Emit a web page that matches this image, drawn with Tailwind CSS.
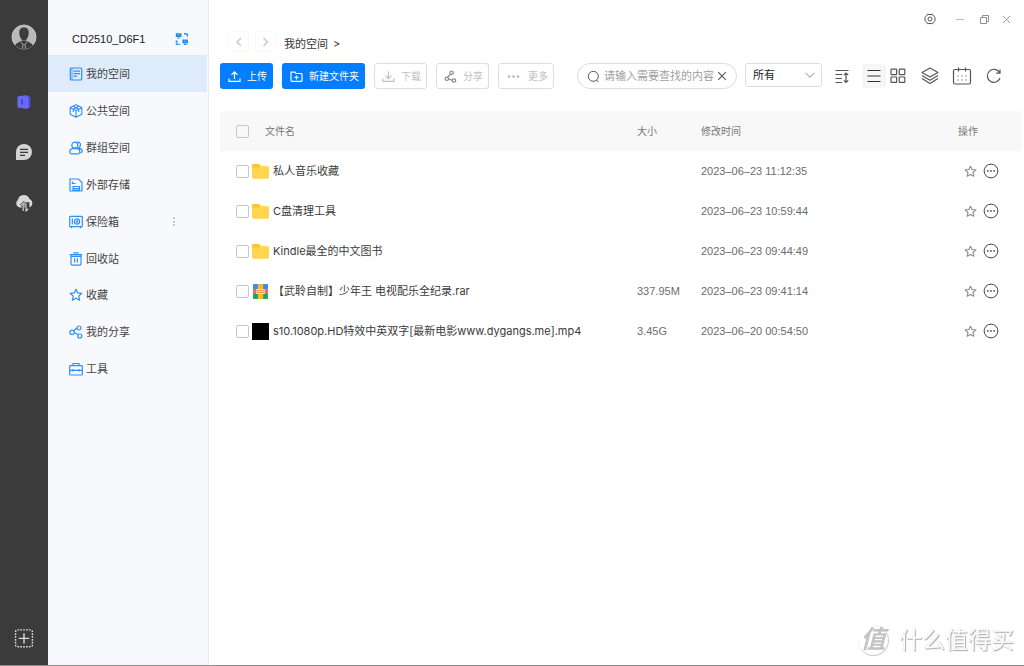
<!DOCTYPE html>
<html lang="zh-CN">
<head>
<meta charset="utf-8">
<meta name="viewport" content="width=device-width, initial-scale=1">
<title>我的空间</title>
<script src="https://cdn.jsdelivr.net/npm/@tailwindcss/browser@4"></script>
</head>
<body class="flex min-h-screen bg-white font-['Inter','Noto_Sans_CJK_SC',sans-serif] text-[11px] leading-4 text-[#444]">

<svg class="hidden" aria-hidden="true">
  <symbol id="star" viewBox="0 0 14 14"><path d="M7 1.200l1.700 3.700 4.100.4-3.100 2.800.9 4.100L7 10.200l-3.600 2 .9-4.100L1.200 5.300l4.100-.4z" fill="none" stroke="currentColor" stroke-width="1.200" stroke-linejoin="round"/></symbol>
  <symbol id="more" viewBox="0 0 16 16"><circle cx="8" cy="8" r="6.900" fill="none" stroke="currentColor" stroke-width="1"/><path d="M4.100 7.200h1.600v1.600H4.100zM7.200 7.200h1.600v1.600H7.200zM10.300 7.200h1.600v1.600h-1.600z" fill="currentColor"/></symbol>
  <symbol id="folder" viewBox="0 0 16 16"><path d="M0 2.200Q0 1 1.200 1h5.200q.8 0 1.200.7L8.600 3.500H16V6H0z" fill="#fbc62d"/><path d="M0 4.200h7l1.500-1.200h6.300Q16 3 16 4.200v9.300Q16 14.800 14.800 14.800H1.200Q0 14.800 0 13.500z" fill="#ffd64c"/></symbol>
</svg>

<aside class="flex w-12 shrink-0 flex-col items-center bg-[#3b3b3b] pt-6 pb-[14px]">
  <button aria-label="账户"><svg class="size-[26px]" viewBox="0 0 26 26"><circle cx="13" cy="13" r="12" fill="#b8b8b8" stroke="#c6c6c6"/><path d="M4 21.500C6 18.500 9 18 10.300 16.800h5.400C17 18 20 18.500 22 21.500Q18 25 13 25T4 21.500z" fill="#3b3b3b"/><path d="M8.300 9q-.3-5.500 4.700-5.500T17.700 9q0 3.500-1.700 6-1.300 1.700-3 1.700T10 15Q8.300 12.500 8.300 9z" fill="#3b3b3b"/><path d="M9.500 17.500l2.700 3M16.500 17.500l-2.700 3M12 20l-.5 4.500M14 20l.5 4.500" stroke="#c0c0c0" stroke-width=".8"/></svg></button>
  <button aria-label="文件" class="mt-11"><svg class="size-4" viewBox="0 0 16 16"><path d="M10 2l4.500.7v11L10 14.500z" fill="#4a4de0"/><path d="M1.500 2.500L11 1v14l-9.500-1.500z" fill="#666bf2"/><path d="M11.700 2.200v12" stroke="#8b90ff" stroke-width=".7"/><path d="M5.300 5.500h1.500v5H5.300z" fill="#3437b5"/></svg></button>
  <button aria-label="消息" class="mt-[33px]"><svg class="size-[18px]" viewBox="0 0 18 18"><path d="M1 17V9a8 8 0 1 1 8 8z" fill="#d4d4d4"/><path d="M5 6.400h8M5 9.400h8M5 12.400h5" stroke="#3b3b3b" stroke-width="1.200"/></svg></button>
  <button aria-label="云传输" class="mt-[33px]"><svg class="h-[18px] w-5" viewBox="0 0 20 18"><path d="M5.500 13.500A4.300 4.300 0 0 1 4 5.800 6 6 0 0 1 15.500 5a4.500 4.500 0 0 1-.5 8.500z" fill="#d8d8d8"/><path d="M9 17V9.500l-2.200 2M9 9v8M12 17V9.500h2.200V14" fill="none" stroke="#3b3b3b" stroke-width="2.400"/><path d="M9.200 17V9.200L7 11.400M12 9v8l2.300-2.200" fill="none" stroke="#cfcfcf" stroke-width="1.200"/></svg></button>
  <button aria-label="添加" class="mt-auto"><svg class="size-[26px]" viewBox="0 0 20 20" fill="none" stroke="#d8d8d8"><rect x="3.500" y="3" width="13" height="13" rx="1.500" stroke-dasharray="1.300 .9" stroke-width="1.100"/><path d="M10 5.500v8M6 9.500h8" stroke-width="1.100"/></svg></button>
</aside>

<nav class="w-[161px] shrink-0 border-r border-[#e8eaed] bg-[#f7f9fc] pt-[23px]">
  <div class="flex h-8 items-center justify-between pr-[19px] pl-6 text-[#222]">
    <span class="font-['Liberation_Sans']">CD2510_D6F1</span>
    <button aria-label="切换设备" class="text-[#1e88f7]"><svg class="size-[14px]" viewBox="0 0 14 14"><path d="M.8 1.200h5.700v3.800H.8zM2.300 5.400h2.800v1.200H2.300zM7.300 7.500H13v3.800H7.300zM8.800 11.800h2.800V13H8.800z" fill="currentColor"/><path d="M9 1.700h3.300v3.500M1.500 8.500v3.700h3.800" fill="none" stroke="currentColor" stroke-width="1.600" stroke-dasharray="2.500 .8"/><path d="M2.300 2.900h2.800M8.800 9.200h2.800" stroke="#83bffc" stroke-width=".8"/></svg></button>
  </div>
  <ul class="mr-px [&_svg]:size-[14px] [&_svg]:text-[#2f8ff5]">
    <li><a href="#mine" aria-current="page" class="flex h-[37px] items-center gap-[3px] bg-[#deebfb] pl-[21px]"><svg viewBox="0 0 14 14" fill="none" stroke="currentColor" stroke-width="1.200"><rect x="1.300" y="1" width="11.400" height="12" rx="1"/><path d="M3 1v12" stroke-width=".8"/><path d="M4.500 4.200h6.500M4.500 6.700h6.500M4.500 9.200h3.500"/></svg>我的空间</a></li>
    <li><a href="#public" class="flex h-[37px] items-center gap-[3px] pl-[21px]"><svg viewBox="0 0 14 14" fill="none" stroke="currentColor" stroke-width="1.100" stroke-linejoin="round"><path d="M7 .8l5.800 2.700v6.800L7 13.200l-5.800-2.900V3.500zM1.200 3.800L7 6.500l5.800-2.700M7 6.500v6.700M4 2.200l5.800 2.900v3M10 2.200L4.200 5.100v3"/></svg>公共空间</a></li>
    <li><a href="#group" class="flex h-[37px] items-center gap-[3px] pl-[21px]"><svg viewBox="0 0 14 14" fill="none" stroke="currentColor" stroke-width="1.200"><circle cx="5.800" cy="4.200" r="3"/><path d="M3.500 7.700h4.300q3 0 3 2.700t-2.300 2.500H3Q.7 12.900.7 10.600T3.500 7.700zM8 1.200q3.400-.4 3.500 2.600 0 2-1.700 3 3.500.9 3.400 3.400-.1 1.500-1.800 1.500"/></svg>群组空间</a></li>
    <li><a href="#external" class="flex h-[37px] items-center gap-[3px] pl-[21px]"><svg viewBox="0 0 14 14" fill="none" stroke="currentColor" stroke-width="1.200"><path d="M1 1h8.500L13 4.500V13H1zM4 13V8.500h6.500V13M4.300 10.500h6M4.300 12h6M3.500 3.500v2h3" /></svg>外部存储</a></li>
    <li class="flex items-center justify-between pr-[26px]"><a href="#safe" class="flex h-[37px] items-center gap-[3px] pl-[21px]"><svg viewBox="0 0 14 14" fill="none" stroke="currentColor" stroke-width="1.200"><rect x=".7" y="1.300" width="12.600" height="10.400" rx=".8"/><circle cx="8" cy="6.500" r="2.600"/><circle cx="8" cy="6.500" r=".6"/><path d="M3.300 3.500v6M2.500 11.700v1.500M11.500 11.700v1.500"/></svg>保险箱</a>
      <button aria-label="保险箱选项"><svg viewBox="0 0 14 14" fill="#888"><path d="M6.400 2.500h1.300v1.300H6.400zM6.400 5.900h1.300v1.300H6.400zM6.400 9.300h1.300v1.300H6.400z"/></svg></button></li>
    <li><a href="#trash" class="flex h-[37px] items-center gap-[3px] pl-[21px]"><svg viewBox="0 0 14 14" fill="none" stroke="currentColor" stroke-width="1.200"><path d="M.8 2.700h12.400M4.300.8h5.400M2 3v8.800q0 1.400 1.400 1.400h7.200q1.400 0 1.400-1.400V3M2.300 4.300h9.400M5.600 6.300v4.200M8.400 6.300v4.200"/></svg>回收站</a></li>
    <li><a href="#favorites" class="flex h-9 items-center gap-[3px] pl-[21px]"><svg><use href="#star"/></svg>收藏</a></li>
    <li><a href="#shares" class="flex h-[37px] items-center gap-[3px] pl-[21px]"><svg viewBox="0 0 14 14" fill="none" stroke="currentColor" stroke-width="1.200"><circle cx="3" cy="7.300" r="2.200"/><circle cx="10" cy="3" r="2"/><circle cx="10.800" cy="11" r="2"/><path d="M4.900 6.200q1-2.500 3.200-3M5.200 7.500l4 2.300"/></svg>我的分享</a></li>
    <li><a href="#tools" class="flex h-[37px] items-center gap-[3px] pl-[21px]"><svg viewBox="0 0 14 14" fill="none" stroke="currentColor" stroke-width="1.200"><rect x=".7" y="3.700" width="12.600" height="9.300" rx=".8"/><path d="M4 3.700V1.500h6v2.200M.7 8.300h12.600M4 7v2.500M10 7v2.500"/></svg>工具</a></li>
  </ul>
</nav>

<main class="flex min-w-0 flex-1 flex-col pt-3 pl-[11px]">
  <div class="flex h-[14px] items-center justify-end gap-[10px] pr-3 text-[#8a929e]">
    <button aria-label="设置" class="mr-2 text-[#555]"><svg class="size-3" viewBox="0 0 12 12" fill="none" stroke="currentColor" stroke-linejoin="round"><path d="M3.500 1.200Q6 2 8.500 1.200q.8 2.200 2.700 3.300-.8 1.500 0 3Q9.300 8.600 8.500 10.800 6 10 3.500 10.800 2.700 8.600.8 7.500q.8-1.500 0-3Q2.700 3.400 3.500 1.200z"/><circle cx="6" cy="6" r="2"/></svg></button>
    <button aria-label="最小化"><svg class="size-3" viewBox="0 0 12 12"><path d="M2 6.500h8" stroke="#b4b9c0"/></svg></button>
    <button aria-label="还原" class="ml-0.5"><svg class="size-3" viewBox="0 0 12 12" fill="none" stroke="currentColor"><path d="M2.500 4.500h6v6h-6zM4.500 4.500v-2h6v6h-2"/></svg></button>
    <button aria-label="关闭"><svg class="size-3" viewBox="0 0 12 12" stroke="currentColor" stroke-width=".9"><path d="M3 3l7 7M10 3l-7 7"/></svg></button>
  </div>

  <div class="mt-[5px] flex items-center gap-[6px] pl-2 text-[#c8c8c8]">
    <button aria-label="后退" class="grid size-[21px] place-items-center border border-[#f9f9f9]"><svg class="size-3" viewBox="0 0 12 12" fill="none" stroke="currentColor" stroke-width="1.400"><path d="M8 2L4 6l4 4"/></svg></button>
    <button aria-label="前进" class="grid size-[21px] place-items-center border border-[#f9f9f9]"><svg class="size-3" viewBox="0 0 12 12" fill="none" stroke="currentColor" stroke-width="1.400"><path d="M3.500 2l4 4-4 4"/></svg></button>
    <div class="ml-0.5 flex gap-[5px] pt-1 text-[#333]"><a href="#mine">我的空间</a><span>&gt;</span></div>
  </div>

  <div class="mt-[11px] flex items-center">
    <div class="flex gap-[9px] text-[10px]">
      <button class="flex h-[26px] items-center gap-[6px] rounded-[3px] bg-[#047dfe] pr-[6px] pl-2 text-white"><svg class="size-[13px]" viewBox="0 0 13 13" fill="none" stroke="currentColor" stroke-width="1.200"><path d="M6.500 9V2M3.500 4.800l3-3 3 3M1 8.500V11.400h11V8.500"/></svg>上传</button>
      <button class="flex h-[26px] items-center gap-[6px] rounded-[3px] bg-[#047dfe] pr-[6px] pl-2 text-white"><svg class="size-[13px]" viewBox="0 0 13 13" fill="none" stroke="currentColor" stroke-width="1.200"><path d="M1 2.200h4l1 1.300h5.200q.8 0 .8.8v6.200q0 .8-.8.8H1.800Q1 11.300 1 10.500zM6.500 5.400v4M4.500 7.400h4"/></svg>新建文件夹</button>
      <button disabled class="flex h-[26px] items-center gap-[6px] rounded-[3px] border border-[#dedede] pr-[5px] pl-[7px] text-[#c0c0c0]"><svg class="size-[13px]" viewBox="0 0 13 13" fill="none" stroke="currentColor" stroke-width="1.200"><path d="M6.500 1.500v7M3.500 5.700l3 3 3-3M1 8.500V11.400h11V8.500"/></svg>下载</button>
      <button disabled class="flex h-[26px] items-center gap-[6px] rounded-[3px] border border-[#dedede] pr-[5px] pl-[7px] text-[#c0c0c0]"><svg class="size-[13px] text-[#858b93]" viewBox="0 0 13 13" fill="none" stroke="currentColor" stroke-width="1.200"><circle cx="7.600" cy="2.700" r="1.700"/><circle cx="2.800" cy="8.800" r="1.700"/><circle cx="10" cy="10.500" r="1.700"/><path d="M6.600 4.200Q5 6 3.600 7.200M4.600 9.100l3.600 1.100"/></svg>分享</button>
      <button disabled class="flex h-[26px] items-center gap-2 rounded-[3px] border border-[#dedede] pr-[5px] pl-2 text-[#c0c0c0]"><svg class="size-[13px]" viewBox="0 0 13 13" fill="#b5b5b5"><circle cx="2" cy="6.500" r="1.300"/><circle cx="6.500" cy="6.500" r="1.300"/><circle cx="11" cy="6.500" r="1.300"/></svg>更多</button>
    </div>
    <div class="ml-[23px] flex h-[26px] max-w-[160px] flex-1 items-center rounded-full border border-[#ddd] pr-2 pl-[9px]">
      <svg class="size-[13px] shrink-0 text-[#555]" viewBox="0 0 13 13" fill="none" stroke="currentColor"><circle cx="6.300" cy="6.300" r="5"/><path d="M9.500 10l2 2"/></svg>
      <input type="text" aria-label="查找" placeholder="请输入需要查找的内容" class="ml-1 min-w-0 flex-1 outline-none placeholder:text-[#a0a0a0]">
      <button aria-label="清除"><svg class="size-3" viewBox="0 0 12 12" stroke="#555" stroke-width="1.100"><path d="M2.200 2.200l7.600 7.600M9.800 2.200L2.200 9.800"/></svg></button>
    </div>
    <div class="relative ml-2 self-start">
      <select aria-label="文件类型" class="h-6 w-[77px] appearance-none rounded-[3px] border border-[#ddd] pl-[7px] text-[#222]"><option>所有</option></select>
      <svg class="pointer-events-none absolute top-[6px] right-[6px] size-3" viewBox="0 0 12 12" fill="none" stroke="#888"><path d="M1.500 3.800L6 8.300l4.500-4.500"/></svg>
    </div>
    <div class="flex flex-1 items-center text-[#555]">
      <button aria-label="排序" class="ml-3"><svg class="size-4" viewBox="0 0 16 16" fill="none" stroke="currentColor" stroke-width="1.200"><path d="M1.500 2.500h13M1.500 6.500H8M1.500 10.500H8M1.500 14.500H8M12 5v9.500M9.800 7.200L12 5l2.200 2.200M9.800 12.300l2.200 2.200 2.200-2.200"/></svg></button>
      <button aria-label="列表视图" class="ml-3 grid size-6 place-items-center rounded-[3px] bg-[#f6f6f6]"><svg class="size-4" viewBox="0 0 16 16" fill="none" stroke="#333" stroke-width="1.200"><path d="M1.500 2.500h13M1.500 8h13M1.500 13.500h13"/></svg></button>
      <button aria-label="网格视图" class="ml-1"><svg class="size-4" viewBox="0 0 16 16" fill="none" stroke="currentColor" stroke-width="1.200"><rect x="1" y="1.200" width="5.600" height="5.400" rx=".5"/><rect x="9.200" y="1.200" width="5.600" height="5.400" rx=".5"/><rect x="1" y="9" width="5.600" height="5.400" rx=".5"/><rect x="9.200" y="9" width="5.600" height="5.400" rx=".5"/></svg></button>
      <button aria-label="分类" class="ml-[14px]"><svg class="size-5" viewBox="0 0 20 20" fill="none" stroke="currentColor" stroke-width="1.200" stroke-linejoin="round"><path d="M10 2l8 4.500-8 4.500-8-4.500zM2 9.500l8 4.700 8-4.700M2 12.500l8 4.900 8-4.900"/></svg></button>
      <button aria-label="日历" class="ml-3"><svg class="size-5" viewBox="0 0 20 20" fill="none" stroke="currentColor" stroke-width="1.200"><rect x="1.500" y="3.500" width="17" height="14.500" rx="1.500"/><path d="M6.500 1.500v4M13.500 1.500v4"/><path d="M5.500 10h1.200M9.400 10h1.200M13.300 10h1.200M5.500 14h1.200M9.400 14h1.200M13.300 14h1.200"/></svg></button>
      <button aria-label="刷新" class="ml-[14px]"><svg class="size-4" viewBox="0 0 16 16" fill="none" stroke="currentColor" stroke-width="1.200"><path d="M13.500 4.500A6.500 6.500 0 1 0 14 10M14 1.500v3.700h-3.700"/></svg></button>
    </div>
  </div>

  <div class="mt-[22px] mr-[2px]">
    <table class="w-full table-fixed text-left text-[#3a3a3a]">
      <thead>
        <tr class="h-10 bg-[#f8f8f8] text-[10px] text-[#777]">
          <th class="w-8 pl-4"><input type="checkbox" aria-label="全选" class="block size-[13px] appearance-none rounded-[2px] border border-[#c4c8cf] bg-transparent"></th>
          <th class="pl-[13px] font-normal">文件名</th>
          <th class="w-16 font-normal">大小</th>
          <th class="w-[257px] font-normal">修改时间</th>
          <th class="w-16 font-normal">操作</th>
        </tr>
      </thead>
      <tbody class="[&_td:nth-child(n+3)]:font-['Liberation_Sans'] [&_td:nth-child(n+3)]:text-[#6c6c6c]">
        <tr class="h-10">
          <td class="pl-4"><input id="f1" type="checkbox" class="block size-[13px] appearance-none rounded-[2px] border border-[#c4c8cf] bg-white"></td>
          <td><label for="f1" class="flex items-center gap-1 whitespace-nowrap"><svg class="size-[17px]"><use href="#folder"/></svg>私人音乐收藏</label></td>
          <td></td><td>2023–06–23 11:12:35</td>
          <td><div class="flex items-center gap-[6px] pl-[6px]"><button aria-label="收藏"><svg class="block size-[13px] text-[#8a8f98]"><use href="#star"/></svg></button><button aria-label="更多操作"><svg class="block size-4 text-[#444]"><use href="#more"/></svg></button></div></td>
        </tr>
        <tr class="h-10">
          <td class="pl-4"><input id="f2" type="checkbox" class="block size-[13px] appearance-none rounded-[2px] border border-[#c4c8cf] bg-white"></td>
          <td><label for="f2" class="flex items-center gap-1 whitespace-nowrap"><svg class="size-[17px]"><use href="#folder"/></svg>C盘清理工具</label></td>
          <td></td><td>2023–06–23 10:59:44</td>
          <td><div class="flex items-center gap-[6px] pl-[6px]"><button aria-label="收藏"><svg class="block size-[13px] text-[#8a8f98]"><use href="#star"/></svg></button><button aria-label="更多操作"><svg class="block size-4 text-[#444]"><use href="#more"/></svg></button></div></td>
        </tr>
        <tr class="h-10">
          <td class="pl-4"><input id="f3" type="checkbox" class="block size-[13px] appearance-none rounded-[2px] border border-[#c4c8cf] bg-white"></td>
          <td><label for="f3" class="flex items-center gap-1 whitespace-nowrap"><svg class="size-[17px]"><use href="#folder"/></svg>Kindle最全的中文图书</label></td>
          <td></td><td>2023–06–23 09:44:49</td>
          <td><div class="flex items-center gap-[6px] pl-[6px]"><button aria-label="收藏"><svg class="block size-[13px] text-[#8a8f98]"><use href="#star"/></svg></button><button aria-label="更多操作"><svg class="block size-4 text-[#444]"><use href="#more"/></svg></button></div></td>
        </tr>
        <tr class="h-10">
          <td class="pl-4"><input id="f4" type="checkbox" class="block size-[13px] appearance-none rounded-[2px] border border-[#c4c8cf] bg-white"></td>
          <td><label for="f4" class="flex items-center gap-1 whitespace-nowrap"><svg class="size-[17px]" viewBox="0 0 16 16"><path d="M1 1h14v5H1z" fill="#3d86f5"/><path d="M1 5.500h14v5H1z" fill="#f4694f"/><path d="M1 10.300h14V15H1z" fill="#12a765"/><path d="M5.500 1h5v14h-5z" fill="#fbbd12"/><rect x="4" y="5.600" width="8" height="4.800" rx=".6" fill="#ffe3c4"/><path d="M5 6.600h6v2.800H5z" fill="#f58a38"/><path d="M5.500 8h5" stroke="#fff" stroke-width=".8"/></svg>【武聆自制】少年王 电视配乐全纪录.rar</label></td>
          <td>337.95M</td><td>2023–06–23 09:41:14</td>
          <td><div class="flex items-center gap-[6px] pl-[6px]"><button aria-label="收藏"><svg class="block size-[13px] text-[#8a8f98]"><use href="#star"/></svg></button><button aria-label="更多操作"><svg class="block size-4 text-[#444]"><use href="#more"/></svg></button></div></td>
        </tr>
        <tr class="h-10">
          <td class="pl-4"><input id="f5" type="checkbox" class="block size-[13px] appearance-none rounded-[2px] border border-[#c4c8cf] bg-white"></td>
          <td><label for="f5" class="flex items-center gap-1 whitespace-nowrap"><span class="size-[17px] bg-black"></span>s10.1080p.HD特效中英双字[最新电影www.dygangs.me].mp4</label></td>
          <td>3.45G</td><td>2023–06–20 00:54:50</td>
          <td><div class="flex items-center gap-[6px] pl-[6px]"><button aria-label="收藏"><svg class="block size-[13px] text-[#8a8f98]"><use href="#star"/></svg></button><button aria-label="更多操作"><svg class="block size-4 text-[#444]"><use href="#more"/></svg></button></div></td>
        </tr>
      </tbody>
    </table>
  </div>
</main>

<div class="pointer-events-none fixed right-[10px] bottom-[10px] flex items-center gap-[10px]">
  <span class="grid size-[31px] place-items-center rounded-full border-r border-b border-[#ccc] text-[25px] leading-none font-bold text-[#c4c4c4] italic">值</span>
  <span class="text-[23px] leading-8 text-[#fdfdfd] [text-shadow:1px_1px_1px_#aaa,0_0_1px_#ccc]">什么值得买</span>
</div>
<div class="fixed inset-x-0 bottom-0 h-px bg-[#8f8f8f]"></div>
</body>
</html>
